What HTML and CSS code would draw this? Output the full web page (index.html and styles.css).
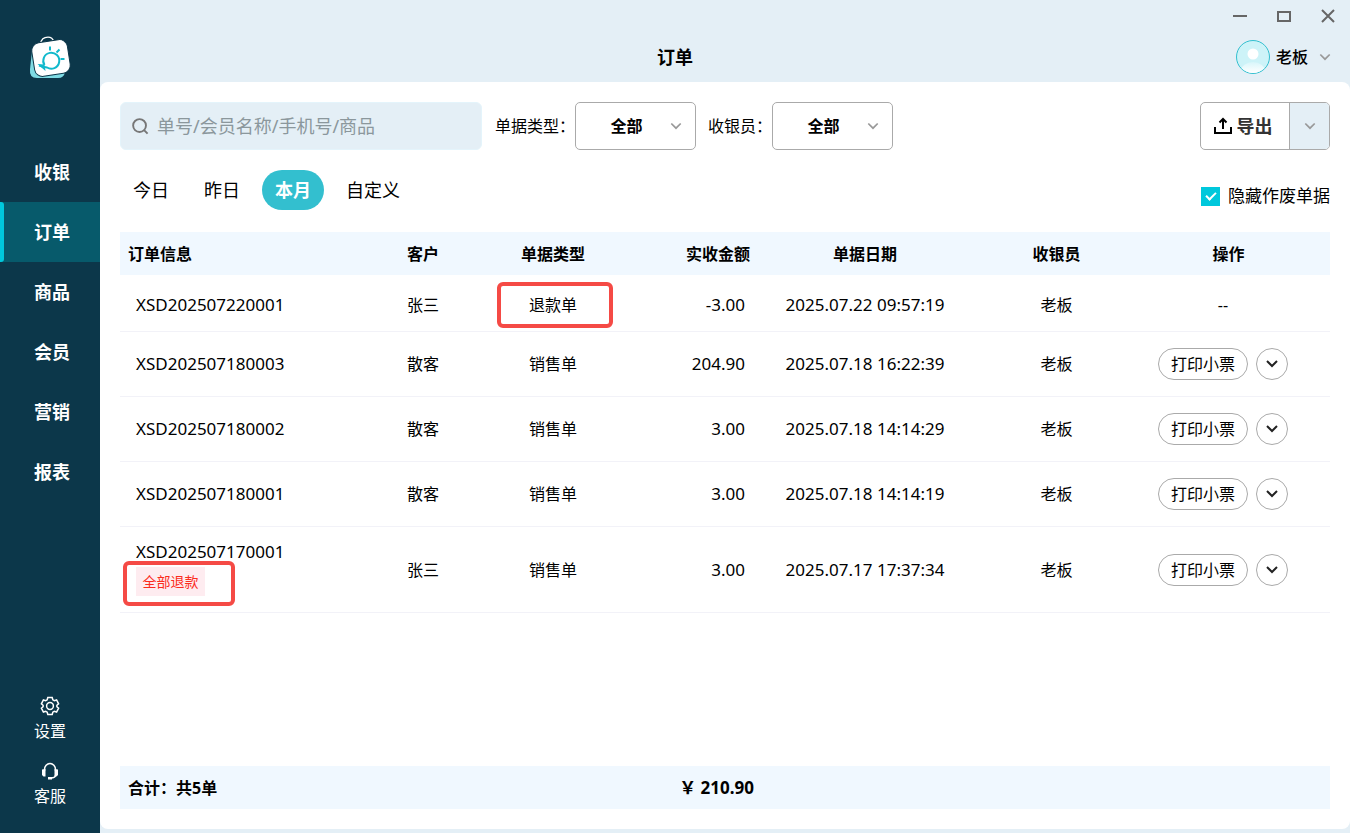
FILE: index.html
```html
<!DOCTYPE html>
<html lang="zh-CN">
<head>
    <meta charset="UTF-8">
    <meta name="viewport" content="width=device-width, initial-scale=1.0">
    <title>订单</title>
    <link rel="stylesheet" href="styles.css">
</head>
<body>
<div class="app">

    <header class="topbar">
        <div class="window-controls">
            <button type="button" aria-label="最小化"><svg width="16" height="16" viewBox="0 0 16 16"><path d="M1 8h14"/></svg></button>
            <button type="button" aria-label="最大化"><svg width="16" height="16" viewBox="0 0 16 16"><path d="M2 4h12v9H2z"/></svg></button>
            <button type="button" aria-label="关闭"><svg width="16" height="16" viewBox="0 0 16 16"><path d="M2 2l12 12M14 2L2 14"/></svg></button>
        </div>
        <h1>订单</h1>
        <button class="user" type="button">
            <svg class="avatar" width="34" height="34" viewBox="0 0 34 34">
                <defs>
                    <linearGradient id="body" x1="0" y1="0" x2="0" y2="1">
                        <stop offset="0" stop-color="#d8f6fa"/>
                        <stop offset="0.6" stop-color="#fff"/>
                    </linearGradient>
                    <clipPath id="round"><circle cx="17" cy="17" r="16"/></clipPath>
                </defs>
                <circle cx="17" cy="17" r="16.500" fill="#cdf3f8" stroke="#33bfcf"/>
                <circle cx="17" cy="14" r="5.500" fill="#fff"/>
                <ellipse cx="17" cy="31" rx="12" ry="9" fill="url(#body)" clip-path="url(#round)"/>
            </svg>
            <span>老板</span>
            <svg class="arrow" width="12" height="12" viewBox="0 0 12 12"><path d="M1.300 3.500L6 8.200l4.700-4.700"/></svg>
        </button>
    </header>

    <aside class="sidebar">
        <svg class="logo" width="44" height="44" viewBox="0 0 44 44">
            <path d="M4 15L2 33Q1 42 9 42L30 42Q36 42 37 36Z" fill="#7fdbe4"/>
            <path d="M12.500 8Q13.500 1.200 20 1.200Q24.500 1.200 26 6" fill="none" stroke="#fff" stroke-width="1.300"/>
            <rect x="5" y="5" width="36" height="34" rx="8" transform="rotate(-9 23 22)" fill="#fff" stroke="#0c374a" stroke-width="1"/>
            <path d="M16.500 29A8 8 0 1 1 19 31.500Q15 31 11 29.500" fill="none" stroke="#11b9cc" stroke-width="2"/>
            <path d="M9.500 28l7 .5 1 6.500-3.500-3z" fill="#11b9cc"/>
            <path d="M22 10.500v4M28.500 16.500l3-3M32.500 23h4" stroke="#11b9cc" stroke-width="2"/>
        </svg>
        <nav class="menu">
            <a href="#"><span>收银</span></a>
            <a href="#" class="active"><span>订单</span></a>
            <a href="#"><span>商品</span></a>
            <a href="#"><span>会员</span></a>
            <a href="#"><span>营销</span></a>
            <a href="#"><span>报表</span></a>
        </nav>
        <div class="tools">
            <a href="#">
                <svg width="20" height="20" viewBox="0 0 20 20"><path d="M7.800 1.500h4.400l.6 2.300 1.500.9 2.300-.7 2 3.800-1.700 1.500v1.400l1.700 1.500-2 3.800-2.300-.7-1.500.9-.6 2.300H7.800l-.6-2.300-1.500-.9-2.300.7-2-3.800 1.700-1.500V9.300L1.400 7.800l2-3.800 2.300.7 1.500-.9z"/><circle cx="10" cy="10" r="3.400"/></svg>
                <span>设置</span>
            </a>
            <a href="#">
                <svg width="20" height="20" viewBox="0 0 20 20"><path d="M4.500 10V8.500a5.500 6 0 0 1 11 0V10M15.500 14c0 2-2 3-5 3"/><path class="solid" d="M2 8.500L5.500 8v7.500h-2L2 14zM18 8.500L14.500 8v7.500h2L18 14zM8 16h4v2.500H8z"/></svg>
                <span>客服</span>
            </a>
        </div>
    </aside>

    <main class="panel">
        <form class="filters">
            <div class="search">
                <svg width="17" height="17" viewBox="0 0 18 18"><circle cx="8" cy="8" r="6.800"/><path d="M12.500 12.500l4 4"/></svg>
                <input type="text" placeholder="单号/会员名称/手机号/商品" aria-label="搜索">
            </div>
            <label for="type">单据类型：</label>
            <div class="select">
                <select id="type"><option>全部</option></select>
                <svg class="arrow" width="12" height="12" viewBox="0 0 12 12"><path d="M1.300 3.500L6 8.200l4.700-4.700"/></svg>
            </div>
            <label for="cashier">收银员：</label>
            <div class="select">
                <select id="cashier"><option>全部</option></select>
                <svg class="arrow" width="12" height="12" viewBox="0 0 12 12"><path d="M1.300 3.500L6 8.200l4.700-4.700"/></svg>
            </div>
            <div class="export">
                <button type="button" class="export-main">
                    <svg width="18" height="18" viewBox="0 0 18 18"><path d="M1 10v6h16v-6M9 12V2M5.500 5.500L9 2l3.500 3.500"/></svg>
                    导出
                </button>
                <button type="button" class="export-more" aria-label="更多导出"><svg class="arrow" width="12" height="12" viewBox="0 0 12 12"><path d="M1.300 3.500L6 8.200l4.700-4.700"/></svg></button>
            </div>
        </form>

        <div class="periods">
            <button type="button">今日</button>
            <button type="button">昨日</button>
            <button type="button" class="active">本月</button>
            <button type="button">自定义</button>
            <label class="hide-void"><input type="checkbox" checked>隐藏作废单据</label>
        </div>

        <table class="orders">
            <colgroup>
                <col>
                <col class="w-customer">
                <col class="w-type">
                <col class="w-amount">
                <col class="w-date">
                <col class="w-cashier">
                <col class="w-action">
            </colgroup>
            <thead>
                <tr><th class="info">订单信息</th><th>客户</th><th>单据类型</th><th class="amount">实收金额</th><th>单据日期</th><th>收银员</th><th class="action">操作</th></tr>
            </thead>
            <tbody>
                <tr class="refund">
                    <td class="info">XSD202507220001</td><td>张三</td><td class="marked">退款单</td><td class="amount">-3.00</td><td class="date">2025.07.22 09:57:19</td><td>老板</td><td class="action">--</td>
                </tr>
                <tr>
                    <td class="info">XSD202507180003</td><td>散客</td><td>销售单</td><td class="amount">204.90</td><td class="date">2025.07.18 16:22:39</td><td>老板</td>
                    <td class="action"><div class="buttons"><button type="button" class="print">打印小票</button><button type="button" class="more" aria-label="更多"><svg width="12" height="12" viewBox="0 0 12 12"><path d="M1 3l5 5 5-5"/></svg></button></div></td>
                </tr>
                <tr>
                    <td class="info">XSD202507180002</td><td>散客</td><td>销售单</td><td class="amount">3.00</td><td class="date">2025.07.18 14:14:29</td><td>老板</td>
                    <td class="action"><div class="buttons"><button type="button" class="print">打印小票</button><button type="button" class="more" aria-label="更多"><svg width="12" height="12" viewBox="0 0 12 12"><path d="M1 3l5 5 5-5"/></svg></button></div></td>
                </tr>
                <tr>
                    <td class="info">XSD202507180001</td><td>散客</td><td>销售单</td><td class="amount">3.00</td><td class="date">2025.07.18 14:14:19</td><td>老板</td>
                    <td class="action"><div class="buttons"><button type="button" class="print">打印小票</button><button type="button" class="more" aria-label="更多"><svg width="12" height="12" viewBox="0 0 12 12"><path d="M1 3l5 5 5-5"/></svg></button></div></td>
                </tr>
                <tr class="tall">
                    <td class="info">XSD202507170001<div class="tag">全部退款</div></td><td>张三</td><td>销售单</td><td class="amount">3.00</td><td class="date">2025.07.17 17:37:34</td><td>老板</td>
                    <td class="action"><div class="buttons"><button type="button" class="print">打印小票</button><button type="button" class="more" aria-label="更多"><svg width="12" height="12" viewBox="0 0 12 12"><path d="M1 3l5 5 5-5"/></svg></button></div></td>
                </tr>
            </tbody>
        </table>

        <footer class="total">
            <span>合计：共5单</span>
            <span class="sum">￥ 210.90</span>
        </footer>
    </main>

</div>
</body>
</html>
```

FILE: styles.css
```css
*, *::before, *::after {
    margin: 0;
    padding: 0;
    box-sizing: border-box;
}

:root {
    --side: #0c374a;
    --side-active: #075a6b;
    --bg: #e4eff6;
    --head: #f0f8ff;
    --main: #33bfcf;
    --bright: #00c8dc;
    --line: #aaaaaa;
    --mark: #f54a45;
}

body {
    background: var(--bg);
    color: #000;
    font-family: "Noto Sans", "Noto Sans CJK SC", sans-serif;
    font-size: 16px;
    line-height: 24px;
}

button, input, select {
    font: inherit;
    color: inherit;
    background: none;
    border: none;
}

button {
    cursor: pointer;
}

a {
    color: #fff;
    text-decoration: none;
}

svg {
    display: block;
    flex: none;
    fill: none;
    stroke: currentColor;
    stroke-width: 2;
}

.arrow {
    color: #999;
    stroke-width: 1.7;
}

.app {
    display: grid;
    grid-template-columns: 100px 1fr;
    grid-template-rows: 82px 1fr;
    min-height: 100vh;
}

/* top bar */
.topbar {
    grid-column: 1 / -1;
    grid-row: 1;
    display: grid;
    grid-template-columns: 1fr auto 1fr;
    grid-template-rows: 32px 50px;
    align-items: center;
}

.window-controls {
    grid-column: 3;
    justify-self: end;
    display: flex;
    gap: 28px;
    padding-right: 14px;
    color: #666;
}

.topbar h1 {
    grid-column: 2;
    grid-row: 2;
    font-size: 18px;
}

.user {
    grid-column: 3;
    grid-row: 2;
    justify-self: end;
    display: flex;
    align-items: center;
    gap: 6px;
    padding-right: 19px;
    font-weight: 500;
}

.user .arrow {
    margin-left: 5px;
}

.avatar {
    stroke: none;
    stroke-width: 1;
}

/* sidebar */
.sidebar {
    grid-column: 1;
    grid-row: 1 / -1;
    display: flex;
    flex-direction: column;
    background: var(--side);
    padding: 36px 0 25px;
}

.logo {
    align-self: center;
    margin-bottom: 62px;
    stroke: none;
}

.menu a {
    display: flex;
    align-items: center;
    height: 60px;
    font-size: 18px;
    font-weight: bold;
}

.menu a::before {
    content: "";
    width: 4px;
    height: 100%;
    border-radius: 0 3px 3px 0;
}

.menu span {
    flex: 1;
    text-align: center;
}

.menu .active {
    background: var(--side-active);
}

.menu .active::before {
    background: var(--bright);
}

.tools {
    margin-top: auto;
    display: flex;
    flex-direction: column;
    gap: 18px;
}

.tools a {
    display: flex;
    flex-direction: column;
    align-items: center;
    gap: 3px;
}

.tools svg {
    stroke-width: 1.5;
}

.tools .solid {
    fill: #fff;
    stroke: none;
}

/* content */
.panel {
    grid-column: 2;
    grid-row: 2;
    display: flex;
    flex-direction: column;
    margin-bottom: 4px;
    padding: 20px;
    background: #fff;
    border-radius: 8px;
}

.filters {
    display: flex;
    align-items: center;
}

.search {
    display: flex;
    align-items: center;
    gap: 8px;
    width: 362px;
    height: 48px;
    margin-right: 13px;
    padding: 0 11px;
    background: var(--bg);
    border: 1px solid #e4f4fb;
    border-radius: 6px;
    color: #777;
}

.search input {
    flex: 1;
    min-width: 0;
    font-size: 18px;
    outline: none;
}

.search input::placeholder {
    color: #8b979c;
}

.select {
    position: relative;
    margin-right: 12px;
}

.select select {
    width: 121px;
    height: 48px;
    padding-right: 18px;
    appearance: none;
    border: 1px solid var(--line);
    border-radius: 5px;
    background: #fff;
    font-weight: bold;
    text-align: center;
    text-align-last: center;
}

.select .arrow {
    position: absolute;
    top: 18px;
    right: 14px;
    pointer-events: none;
}

.export {
    display: flex;
    width: 130px;
    height: 48px;
    margin-left: auto;
    border: 1px solid var(--line);
    border-radius: 5px;
    overflow: hidden;
}

.export-main {
    flex: 1;
    display: flex;
    align-items: center;
    justify-content: center;
    gap: 5px;
    padding-right: 4px;
    font-size: 18px;
    font-weight: bold;
    color: #333;
}

.export-main svg {
    color: #000;
}

.export-more {
    display: flex;
    align-items: center;
    justify-content: center;
    width: 40px;
    background: var(--bg);
    border-left: 1px solid var(--line);
}

.periods {
    display: flex;
    align-items: flex-end;
    gap: 9px;
    margin: 20px 0 22px;
}

.periods button {
    height: 40px;
    padding: 0 13px;
    border-radius: 20px;
    font-size: 18px;
}

.periods .active {
    background: var(--main);
    color: #fff;
    font-weight: bold;
}

.hide-void {
    display: flex;
    align-items: center;
    gap: 8px;
    height: 28px;
    margin-left: auto;
    font-size: 17px;
}

.hide-void input {
    appearance: none;
    display: flex;
    align-items: center;
    justify-content: center;
    width: 19px;
    height: 19px;
    background: var(--bright);
}

.hide-void input:checked::before {
    content: "";
    width: 10px;
    height: 6px;
    margin-bottom: 3px;
    border: solid #fff;
    border-width: 0 0 2px 2px;
    transform: rotate(-45deg);
}

/* table */
.orders {
    width: 100%;
    table-layout: fixed;
    border-spacing: 0;
    text-align: center;
}

.w-customer, .w-type {
    width: 130px;
}

.w-amount {
    width: 142px;
}

.w-date {
    width: 210px;
}

.w-cashier {
    width: 173px;
}

.w-action {
    width: 187px;
}

.orders th {
    height: 43px;
    background: var(--head);
}

.orders td {
    height: 65px;
    border-bottom: 1px solid #f2f2f8;
}

.orders .refund td {
    height: 57px;
    padding-top: 4px;
}

.orders .tall td {
    height: 86px;
}

.orders th.info {
    padding-left: 8px;
    text-align: left;
}

.orders td.info {
    padding-left: 16px;
    text-align: left;
}

.orders .tall .info {
    padding-bottom: 4px;
}

.orders td.info, .orders td.amount, .orders td.date {
    font-size: 17px;
}

.orders th.amount {
    padding-right: 10px;
    text-align: right;
}

.orders td.amount {
    padding-right: 15px;
    text-align: right;
}

.orders th.action {
    padding-right: 16px;
}

.orders td.action {
    padding-right: 27px;
}

.marked, .tag {
    position: relative;
}

/* red frames over the refunded items */
.marked::after, .tag::after {
    content: "";
    position: absolute;
    border: 4px solid var(--mark);
    border-radius: 6px;
}

.marked::after {
    top: 7px;
    left: 9px;
    width: 116px;
    height: 46px;
}

.tag {
    width: 69px;
    height: 29px;
    margin-top: 3px;
    background: #feecf0;
    color: #fb2c1d;
    font-size: 14px;
    line-height: 29px;
    text-align: center;
}

.tag::after {
    top: -6px;
    left: -13px;
    width: 112px;
    height: 45px;
}

.buttons {
    display: flex;
    justify-content: center;
    gap: 8px;
}

.print, .more {
    height: 32px;
    border: 1px solid var(--line);
    border-radius: 16px;
}

.print {
    padding: 0 12px;
}

.more {
    display: flex;
    align-items: center;
    justify-content: center;
    width: 32px;
    color: #222;
}

.total {
    display: grid;
    grid-template-columns: 1fr 142px 570px;
    align-items: center;
    height: 43px;
    margin-top: auto;
    padding-left: 8px;
    background: var(--head);
    font-weight: bold;
}

.sum {
    padding-right: 6px;
    font-size: 17px;
    text-align: right;
}
```
